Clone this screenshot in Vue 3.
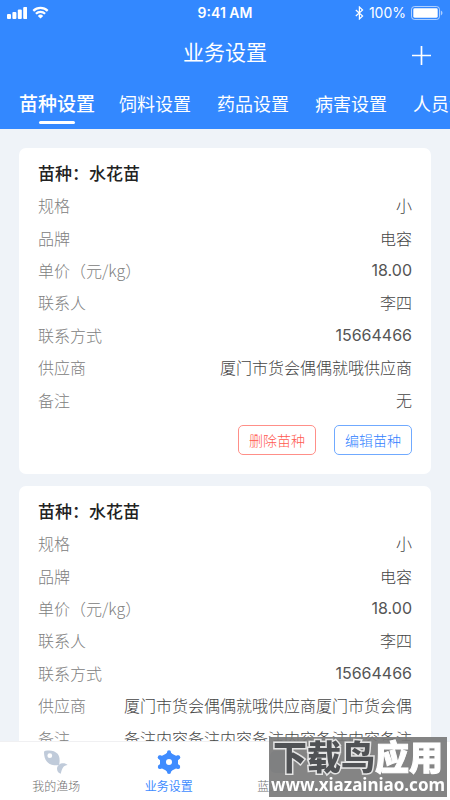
<script setup>
import { ref } from 'vue'

const tabs = ['苗种设置', '饲料设置', '药品设置', '病害设置', '人员设置']
const activeTab = ref(0)

const common = [
  { label: '规格', value: '小' },
  { label: '品牌', value: '电容' },
  { label: '单价（元/kg）', value: '18.00', numeric: true },
  { label: '联系人', value: '李四' },
  { label: '联系方式', value: '15664466', numeric: true },
]

const cards = [
  {
    name: '水花苗',
    rows: [
      ...common,
      { label: '供应商', value: '厦门市货会偶偶就哦供应商' },
      { label: '备注', value: '无' },
    ],
  },
  {
    name: '水花苗',
    rows: [
      ...common,
      { label: '供应商', value: '厦门市货会偶偶就哦供应商厦门市货会偶' },
      { label: '备注', value: '备注内容备注内容备注内容备注内容备注' },
    ],
  },
]
</script>

<template>
  <div class="app">
    <header class="header">
      <div class="status">
        <div class="status-side">
          <svg class="signal" viewBox="0 0 20 13" aria-hidden="true">
            <rect x="0" y="8" width="4" height="5" rx="1" />
            <rect x="5.4" y="6" width="4" height="7" rx="1" />
            <rect x="10.8" y="3.5" width="4" height="9.5" rx="1" />
            <rect x="16.2" y="1" width="4" height="12" rx="1" />
          </svg>
          <svg class="wifi" viewBox="0 0 17 13" aria-hidden="true">
            <path d="M1.3 4.9a10.3 10.3 0 0 1 14.4 0M3.9 7.7a6.6 6.6 0 0 1 9.2 0" />
            <path class="dot" d="M8.5 12.6 5.8 9.9a3.9 3.9 0 0 1 5.4 0z" />
          </svg>
        </div>
        <span class="clock">9:41 AM</span>
        <div class="status-side status-right">
          <svg class="bluetooth" viewBox="0 0 9 14" aria-hidden="true">
            <path d="M.8 4 7.6 10 4.4 13V1l3.2 3L.8 10" />
          </svg>
          <span class="percent">100%</span>
          <svg class="battery" viewBox="0 0 32 14" aria-hidden="true">
            <rect class="shell" x=".5" y=".5" width="28" height="13" rx="3" />
            <rect class="level" x="2.3" y="2.3" width="24.4" height="9.4" rx="1.4" />
            <path class="cap" d="M29.8 4.6c2.2.7 2.2 4.1 0 4.8z" />
          </svg>
        </div>
      </div>
      <div class="titlebar">
        <h1>业务设置</h1>
        <button class="add" type="button" aria-label="添加">
          <svg viewBox="0 0 18 18" aria-hidden="true"><path d="M9 0v18M0 9h18" /></svg>
        </button>
      </div>
      <nav class="tabs">
        <button
          v-for="(tab, i) in tabs"
          :key="tab"
          type="button"
          class="tab"
          :class="{ active: i === activeTab }"
          @click="activeTab = i"
        >{{ tab }}</button>
      </nav>
    </header>

    <main class="content">
      <article v-for="(card, i) in cards" :key="i" class="card">
        <h2>苗种：{{ card.name }}</h2>
        <dl>
          <div v-for="row in card.rows" :key="row.label" class="row">
            <dt>{{ row.label }}</dt>
            <dd :class="{ numeric: row.numeric }">{{ row.value }}</dd>
          </div>
        </dl>
        <div class="actions">
          <button type="button" class="action danger">删除苗种</button>
          <button type="button" class="action primary">编辑苗种</button>
        </div>
      </article>
    </main>

    <nav class="tabbar">
      <a href="#farm" class="nav-item">
        <svg viewBox="0 0 26 26" aria-hidden="true">
          <path
            fill-rule="evenodd"
            d="M1 3.500C1 2.500 1.500 2 2.500 1.800 7 .8 12 1.600 14.600 4.800c2.200 2.700 2.300 6.300 1.700 10.400-.1.800-.4 1.100-1.200 1.100-4.600.1-8.500-.5-11.100-3.600C1.800 10.200 1.100 7 1 3.500zM6.800 4.300a2.400 2.400 0 1 0 0 4.800 2.400 2.400 0 0 0 0-4.800z"
          />
          <path d="M14 19.500c.4-3.200 3.100-5.200 6.200-5.200 1.700 0 3.200.6 4.400 1.800-3.800.2-5.600 3-6.800 8.700-2.300-.7-3.900-2.600-3.800-5.300z" />
        </svg>
        <span>我的渔场</span>
      </a>
      <a href="#settings" class="nav-item current">
        <svg viewBox="0 0 26 26" aria-hidden="true">
          <path
            fill-rule="evenodd"
            d="M11.300 3.400h3.400L16.500 5 20 6.800l2.300-.3 1.500 2.900L22 11.200v3.800l1.800 1.800-1.500 2.900-2.300-.3-3.500 1.800-1.800 1.700h-3.400l-1.800-1.700L6 19.400l-2.300.3-1.500-2.900L4 15v-3.800L2.200 9.400l1.500-2.900 2.300.3L9.500 5zM13 10.100a3 3 0 1 0 0 6 3 3 0 0 0 0-6z"
          />
          <circle cx="13" cy="3.200" r="2" />
          <circle cx="22.200" cy="8.200" r="2" />
          <circle cx="22.200" cy="18" r="2" />
          <circle cx="13" cy="23" r="2" />
          <circle cx="3.800" cy="18" r="2" />
          <circle cx="3.800" cy="8.200" r="2" />
        </svg>
        <span>业务设置</span>
      </a>
      <a href="#bluetooth" class="nav-item">
        <svg viewBox="0 0 26 26" aria-hidden="true">
          <rect x="2" y="2" width="22" height="22" rx="5" />
        </svg>
        <span>蓝牙设置</span>
      </a>
    </nav>

    <div class="watermark">
      <div class="mark-name"><span class="dark">下载鸟</span><span class="light">应用</span></div>
      <div class="mark-url">www.xiazainiao.com</div>
    </div>
  </div>
</template>

<style>
body {
  background: #eff3f8;
}
</style>

<style scoped>
.app {
  position: relative;
  display: flex;
  flex-direction: column;
  height: 100vh;
  overflow: hidden;
  font-family: "Noto Sans CJK SC", sans-serif;
  font-weight: 300;
  color: #444;
}
button {
  margin: 0;
  padding: 0;
  border: 0;
  background: none;
  font: inherit;
  color: inherit;
  cursor: pointer;
}
svg {
  display: block;
  fill: currentColor;
}
.header {
  flex: none;
  background: #3388ff;
  color: #fff;
}
.status {
  display: flex;
  align-items: center;
  height: 25px;
  padding: 0 7px;
  font-family: Inter, sans-serif;
}
.status-side {
  display: flex;
  flex: 1;
  align-items: center;
  gap: 5px;
}
.status-right {
  justify-content: flex-end;
}
.signal {
  width: 20px;
  height: 13px;
}
.wifi {
  width: 17px;
  height: 13px;
}
.wifi path {
  fill: none;
  stroke: currentColor;
  stroke-width: 2.2;
}
.wifi .dot {
  fill: currentColor;
  stroke: none;
}
.clock {
  font-size: 14px;
  font-weight: 600;
}
.bluetooth {
  width: 9px;
  height: 14px;
}
.bluetooth path {
  fill: none;
  stroke: currentColor;
  stroke-width: 1.2;
}
.percent {
  font-size: 14px;
  font-weight: 400;
}
.battery {
  width: 32px;
  height: 14px;
}
.battery .shell {
  fill: none;
  stroke: currentColor;
  opacity: 0.6;
}
.battery .cap {
  opacity: 0.6;
}
.titlebar {
  display: grid;
  grid-template-columns: 1fr auto 1fr;
  align-items: center;
  height: 52px;
  padding: 0 19px;
}
h1 {
  grid-column: 2;
  margin: 0;
  font-size: 21px;
  font-weight: 400;
  line-height: 32px;
}
.add {
  justify-self: end;
  padding-top: 8px;
}
.add svg {
  width: 19px;
  height: 19px;
}
.add path {
  stroke: currentColor;
  stroke-width: 1.6;
}
.tabs {
  display: flex;
  height: 52px;
  padding-left: 8px;
  overflow: hidden;
}
.tab {
  display: flex;
  flex: none;
  flex-direction: column;
  align-items: center;
  width: 98px;
  padding-top: 11px;
  font-size: 18px;
  font-weight: 400;
  line-height: 30px;
  white-space: nowrap;
}
.tab.active {
  font-size: 19px;
  font-weight: 500;
}
.tab.active::after {
  width: 36px;
  height: 3px;
  margin-top: 3px;
  border-radius: 2px;
  background: #fff;
  content: "";
}
.content {
  display: flex;
  flex: 1;
  flex-direction: column;
  gap: 12px;
  min-height: 0;
  padding: 19px 19px 12px;
  overflow-y: auto;
  background: #eff3f8;
  scrollbar-width: none;
}
.card {
  flex: none;
  padding: 9px 19px 19px;
  border-radius: 7px;
  background: #fff;
}
h2 {
  margin: 0;
  color: #222;
  font-size: 17px;
  font-weight: 500;
  line-height: 32px;
}
dl {
  display: grid;
  min-height: 227px;
  margin: 0;
}
.row {
  display: flex;
  align-items: center;
  justify-content: space-between;
  font-size: 16px;
  line-height: 32px;
  white-space: nowrap;
}
dt {
  color: #808080;
}
dd {
  margin: 0;
}
.numeric {
  color: #555;
  font-family: Inter, sans-serif;
  font-weight: 400;
}
.actions {
  display: flex;
  gap: 18px;
  justify-content: flex-end;
  margin-top: 9px;
}
.action {
  width: 78px;
  height: 30px;
  border: 1px solid;
  border-radius: 5px;
  font-size: 14px;
}
.danger {
  border-color: #ff8f88;
  color: #ff5a50;
}
.primary {
  border-color: #70aaff;
  color: #2f80ff;
}
.tabbar {
  display: grid;
  flex: none;
  grid-template-columns: repeat(4, 1fr);
  height: 58px;
  border-top: 1px solid #f0f0f2;
  background: #fff;
}
.nav-item {
  display: flex;
  flex-direction: column;
  align-items: center;
  padding-top: 7px;
  color: #c0cbda;
  text-decoration: none;
}
.nav-item svg {
  width: 26px;
  height: 26px;
}
.nav-item span {
  color: #707070;
  font-size: 12px;
  line-height: 22px;
}
.nav-item.current,
.nav-item.current span {
  color: #3f8cff;
}
.nav-item.current span {
  font-weight: 400;
}
.watermark {
  position: absolute;
  right: 3px;
  bottom: 3px;
  width: 178px;
  height: 60px;
  background: rgba(122, 122, 122, 0.92);
  color: #fff;
  text-align: center;
  white-space: nowrap;
}
.mark-name {
  font-size: 34px;
  font-weight: 900;
  line-height: 38px;
}
.mark-name .dark {
  color: #505255;
  -webkit-text-stroke: 3px #e4e4e4;
  paint-order: stroke fill;
}
.mark-name .light {
  -webkit-text-stroke: 1px #fff;
}
.mark-url {
  font-family: "Noto Sans", sans-serif;
  font-size: 17px;
  font-weight: 700;
  line-height: 20px;
}
</style>
